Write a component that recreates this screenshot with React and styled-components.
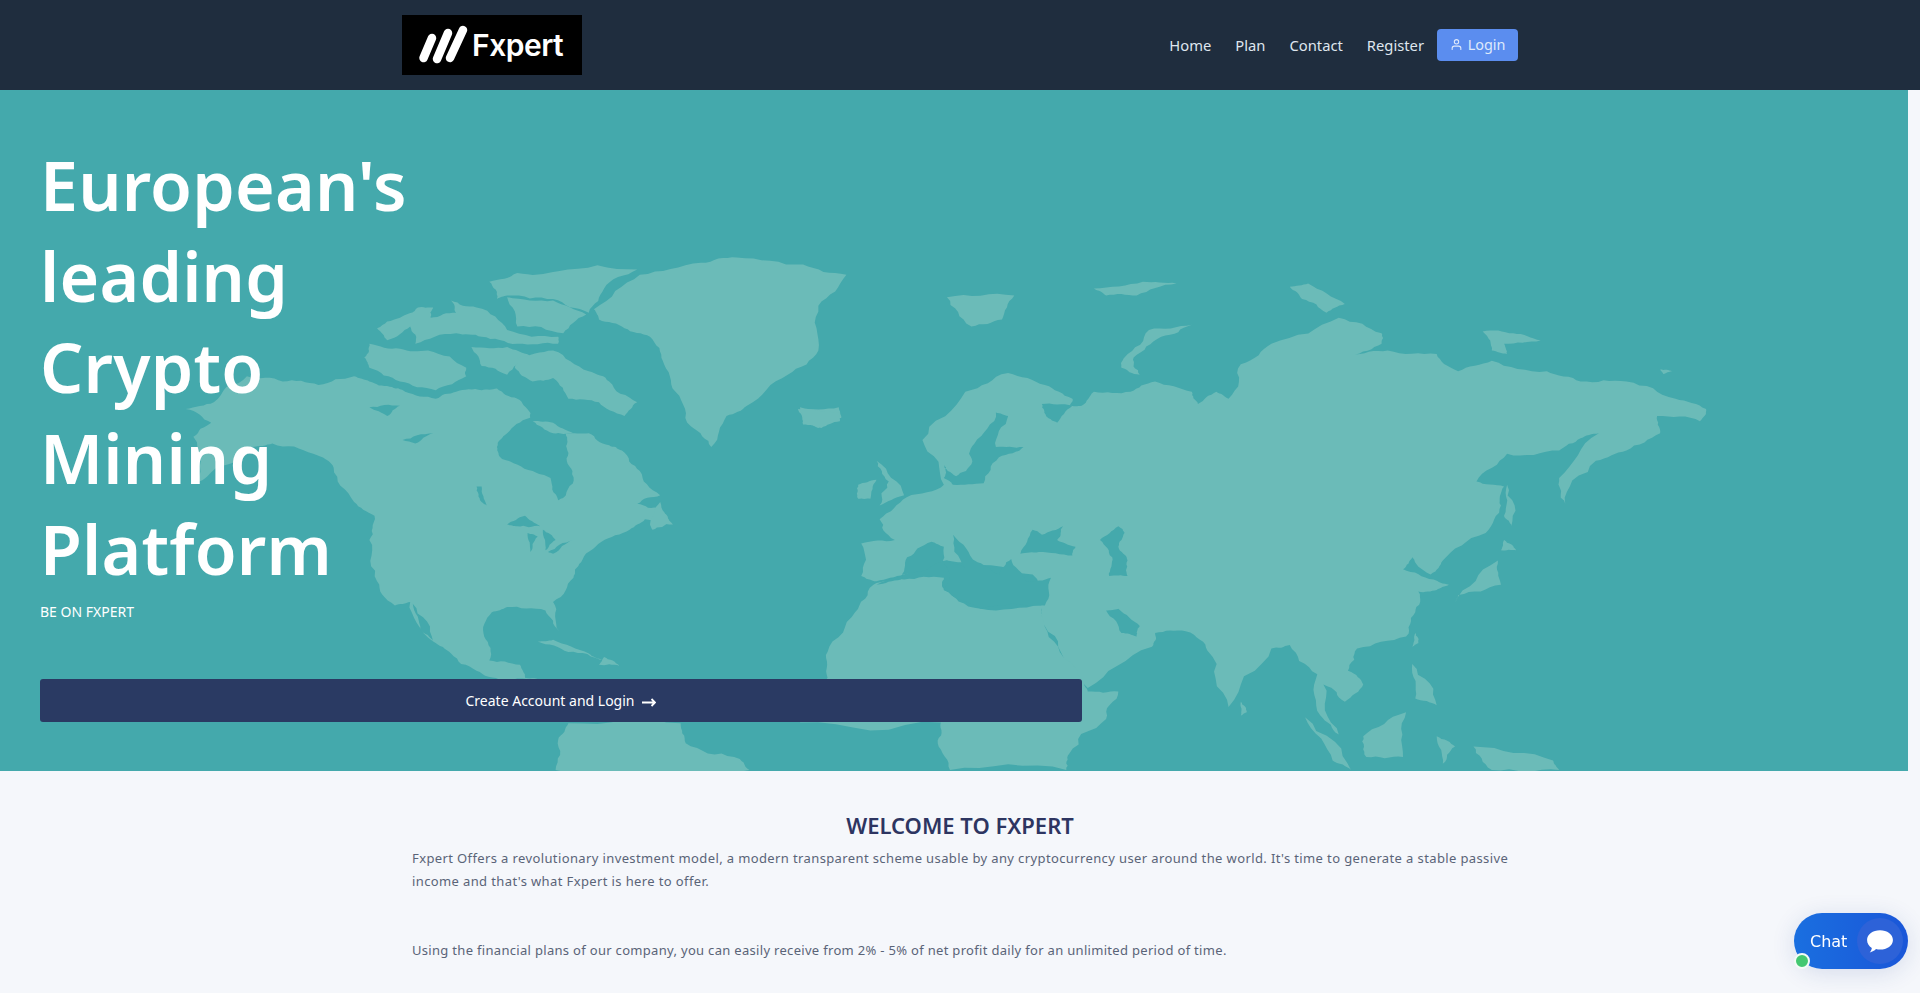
import React from "react";
import styled, { createGlobalStyle } from "styled-components";
import { FiUser } from "react-icons/fi";

const OCEAN = "#44a9ac";
const LAND = "#6bbbb8";

const GlobalStyle = createGlobalStyle`
  html, body { margin: 0; padding: 0; background: #f5f7fb; overflow: hidden; }
  * { box-sizing: border-box; }
  body { font-family: "Noto Sans", "DejaVu Sans", sans-serif; }
`;

const Nav = styled.header`
  height: 90px;
  background: #1f2d3e;
`;
const Container = styled.div`
  width: 1140px;
  margin: 0 auto;
  padding: 0 12px;
  height: 100%;
  display: flex;
  align-items: center;
  justify-content: space-between;
`;
const LogoBox = styled.a`
  display: flex;
  align-items: center;
  width: 180px;
  height: 60px;
  background: #000;
  color: #fff;
`;
const LogoMark = styled.svg`
  width: 70px;
  height: 60px;
  flex: none;
`;
const LogoText = styled.span`
  font-family: Inter, sans-serif;
  font-size: 30px;
  font-weight: 600;
  letter-spacing: -0.5px;
  line-height: 1;
`;
const Menu = styled.nav`
  display: flex;
  align-items: center;
  margin-top: -1px;
`;
const MenuLink = styled.a`
  padding: 0 12px;
  font-size: 14.75px;
  color: #dfe6ee;
  white-space: nowrap;
`;
const LoginButton = styled.a`
  display: flex;
  align-items: center;
  justify-content: center;
  gap: 5px;
  width: 81px;
  height: 32px;
  margin-left: 1px;
  border-radius: 4px;
  background: #5b8def;
  color: #dfe9fb;
  font-size: 14.4px;
  svg { width: 13px; height: 13px; }
`;
const Hero = styled.section`
  position: relative;
  width: 1908px;
  height: 681px;
  padding: 49px 40px 0;
  background: ${OCEAN};
  overflow: hidden;
`;
const MapArt = styled.svg`
  position: absolute;
  inset: 0;
  width: 100%;
  height: 100%;
`;
const HeroBody = styled.div`
  position: relative;
`;
const HeroTitle = styled.h1`
  margin: 0;
  width: 420px;
  color: #fff;
  font-size: 68px;
  font-weight: 600;
  line-height: 91px;
  letter-spacing: 0.2px;
`;
const HeroSub = styled.p`
  margin: 8px 0 0;
  color: #fff;
  font-size: 14px;
  line-height: 20px;
`;
const CreateButton = styled.a`
  display: flex;
  align-items: center;
  justify-content: center;
  gap: 8px;
  width: 1042px;
  height: 43px;
  margin-top: 57px;
  border-radius: 3px;
  background: #2a3a63;
  color: #fff;
  font-size: 14px;
  svg { width: 14px; height: 12px; margin-top: 2px; }
`;
const Welcome = styled.section`
  width: 1140px;
  margin: 0 auto;
  padding: 40px 12px 0 22px;
`;
const WelcomeTitle = styled.h2`
  margin: 0 10px 8px 0;
  text-align: center;
  color: #2d3561;
  font-size: 22px;
  font-weight: 600;
  line-height: 28px;
`;
const Para = styled.p`
  margin: 0 0 46px;
  color: #5a6478;
  font-size: 13px;
  line-height: 23px;
  letter-spacing: ${(p) => p.$spacing};
`;
const ChatPill = styled.button`
  position: fixed;
  left: 1794px;
  top: 913px;
  display: flex;
  align-items: center;
  width: 114px;
  height: 56px;
  padding: 0 5px 0 16px;
  border: 0;
  border-radius: 28px;
  background: linear-gradient(90deg, #1a6fe0, #1a56d8);
  box-shadow: 0 4px 24px rgba(30, 60, 140, 0.14);
  color: #fff;
  font-family: "DejaVu Sans", sans-serif;
  font-size: 16px;
  justify-content: space-between;
`;
const ChatIcon = styled.span`
  display: flex;
  align-items: center;
  justify-content: center;
  width: 46px;
  height: 46px;
  border-radius: 50%;
  background: #2d62d8;
  svg { width: 28px; height: 26px; }
`;
const OnlineDot = styled.span`
  position: absolute;
  left: 0;
  bottom: 0;
  width: 16px;
  height: 16px;
  border: 2px solid #f2fbf6;
  border-radius: 50%;
  background: #43c871;
`;

// traced in two crops of the picture, hence the two transforms
const westLand = [
  "125,500 190,425 260,440 330,450 400,425 430,440 470,455 500,470 560,490 600,470 650,465 680,460 720,490 745,530 745,545 700,590 680,630 690,665 750,700 785,720 800,785 815,770 828,700 818,640 815,590 860,590 900,625 925,640 960,700 1000,770 955,795 1000,810 1025,855 970,840 940,870 885,905 845,965 830,1010 790,1080 802,1165 775,1105 700,1095 670,1110 655,1180 665,1250 725,1262 735,1300 770,1310 690,1310 640,1280 590,1230 555,1195 510,1080 480,1090 445,1020 430,900 440,830 400,790 360,690 320,650 240,620 200,630 130,690 90,735 85,600 120,560 70,520",
  "870,230 960,130 1080,95 1150,80 1280,100 1365,130 1310,220 1310,350 1250,420 1170,510 1130,540 1100,630 1060,570 1030,470 1005,380 980,310 930,285 880,260",
  "1270,520 1350,515 1355,545 1310,575 1280,555",
  "430,330 490,345 545,350 620,400 620,425 560,465 490,440 430,400 420,370",
  "445,285 490,255 525,225 555,225 550,255 600,240 590,205 640,225 700,290 800,310 800,330 720,330 650,310 600,300 520,330 510,280 465,320",
  "665,150 720,125 800,120 955,115 890,170 860,240 790,200 700,190 680,200",
  "700,195 790,205 855,245 810,300 720,280",
  "630,340 700,340 745,365 700,420 650,395",
  "720,370 790,350 860,410 900,440 955,500 930,540 880,500 820,490 790,430 750,440 715,400",
  "750,555 790,560 830,590 790,590",
  "820,1432 800,1480 795,1568 1175,1568 1145,1530 1050,1490 1040,1432",
  "760,1195 790,1190 860,1230 890,1250 820,1225",
  "890,1240 920,1265 880,1262",
  "980,855 1000,790 1020,850 985,870",
];
const westWater = [
  "430,515 490,510 465,540",
  "495,610 555,590 520,620",
  "640,745 650,745 660,800 650,790",
  "700,855 735,830 765,860 720,860",
  "740,880 760,890 745,935",
  "770,870 795,900 775,930",
  "780,935 830,900 790,940",
  "515,1085 555,1195 530,1160",
];
const eastLand = [
  "100,910 155,900 130,840 175,775 235,740 200,610 270,470 340,415 400,450 445,490 440,510 460,510 480,470 540,470 580,440 640,470 650,505 680,470 700,490 720,390 770,330 880,255 950,300 950,330 900,365 960,350 1040,360 1075,410 1130,380 1220,410 1275,440 1350,440 1430,490 1480,520 1470,555 1400,540 1405,590 1350,640 1300,670 1250,795 1240,720 1305,590 1275,605 1240,640 1155,650 1105,730 1150,745 1145,800 1120,880 1050,960 1030,1000 1000,950 985,985 1035,1015 1060,1030 1040,1045 1010,1050 1005,1110 990,1180 910,1215 895,1280 920,1320 890,1370 855,1320 880,1465 850,1410 845,1290 800,1205 770,1215 700,1385 665,1220 630,1165 580,1170 575,1210 470,1330 430,1240 395,1120 380,1000 240,960 170,1000 125,1020 100,1005",
  "120,1030 170,1015 235,1010 235,1045 295,1100 395,1090 395,1120 430,1240 460,1310 470,1340 520,1340 500,1420 440,1520 435,1568 245,1568 225,1490 230,1430 0,1430 45,1300 45,1225 90,1110",
  "240,195 350,190 330,260 280,280",
  "480,170 560,150 615,155 550,190 500,190",
  "640,275 570,290 530,370 525,400 555,420 545,370 590,310",
  "800,165 830,155 890,215 860,240 820,200",
  "1115,295 1165,300 1210,320 1150,330 1155,360 1130,350",
  "1405,405 1425,410 1410,418",
  "125,670 170,770 130,800 145,730",
  "95,740 125,725 115,780 95,780",
  "0,515 65,530 65,555 35,575 5,565",
  "1070,1080 1140,960 1145,1030 1075,1060",
  "1150,900 1170,930 1145,930",
  "1155,740 1162,860 1150,830",
  "1005,1170 1010,1200 1000,1210",
  "720,1370 730,1400 720,1410",
  "825,1415 900,1568 870,1540",
  "920,1470 990,1400 985,1530 925,1530",
  "1000,1260 1040,1380 1005,1360",
  "1100,1500 1230,1540 1240,1568 1130,1568",
  "1040,1470 1070,1500 1050,1550",
];
const eastWater = [
  "285,620 320,530 340,540 320,630 365,630 325,660 300,735 250,740 235,720 235,680 255,715 280,680",
  "395,505 445,510 420,560 405,545",
  "360,940 380,870 395,885 430,860 420,900 450,920 445,945 390,935",
  "490,900 520,860 530,880 520,920 535,960 535,1005 505,1005 510,950",
  "500,1105 520,1100 555,1150 550,1180 525,1170",
  "125,1030 165,1015 175,950 215,905 235,920 245,1000 235,1045 295,1100 400,1090 410,1010 370,1020 345,955 325,1000 290,965 250,885 270,980 240,960 200,990",
];

// breaks the straight traced edges up into a coast line
const roughen = (points) => {
  let pts = points.split(" ").map((p) => p.split(",").map(Number));
  let seed = pts.length * 7 + 3;
  const rand = () => {
    seed = (seed * 9301 + 49297) % 233280;
    return seed / 233280 - 0.5;
  };
  for (let round = 0; round < 3; round++) {
    const next = [];
    pts.forEach((a, i) => {
      const b = pts[(i + 1) % pts.length];
      const dx = b[0] - a[0];
      const dy = b[1] - a[1];
      const k = 0.22 * rand();
      next.push(a, [(a[0] + b[0]) / 2 - dy * k, (a[1] + b[1]) / 2 + dx * k]);
    });
    pts = next;
  }
  return pts.map((p) => p.join(",")).join(" ");
};

const Shapes = ({ list, fill }) =>
  list.map((p, i) => <polygon key={i} points={roughen(p)} fill={fill} />);

const Continents = () => (
  <MapArt viewBox="0 0 1908 681" preserveAspectRatio="none">
    <g transform="translate(150 140) scale(0.5102 0.3444)">
      <Shapes list={westLand} fill={LAND} />
      <Shapes list={westWater} fill={OCEAN} />
    </g>
    <g transform="translate(800 140) scale(0.6122 0.3444)">
      <Shapes list={eastLand} fill={LAND} />
      <Shapes list={eastWater} fill={OCEAN} />
    </g>
  </MapArt>
);

const App = () => (
  <>
    <GlobalStyle />
    <Nav>
      <Container>
        <LogoBox>
          <LogoMark viewBox="0 0 70 60">
            <g stroke="#fff" strokeWidth="8.5" strokeLinecap="round">
              <line x1="21.5" y1="43" x2="30" y2="23" />
              <line x1="35" y1="44" x2="46" y2="18" />
              <line x1="48" y1="43" x2="61" y2="15" />
            </g>
          </LogoMark>
          <LogoText>Fxpert</LogoText>
        </LogoBox>
        <Menu>
          <MenuLink>Home</MenuLink>
          <MenuLink>Plan</MenuLink>
          <MenuLink>Contact</MenuLink>
          <MenuLink>Register</MenuLink>
          <LoginButton><FiUser />Login</LoginButton>
        </Menu>
      </Container>
    </Nav>
    <Hero>
      <Continents />
      <HeroBody>
        <HeroTitle>European's leading Crypto Mining Platform</HeroTitle>
        <HeroSub>BE ON FXPERT</HeroSub>
        <CreateButton>
          Create Account and Login
          <svg viewBox="0 0 14 12" fill="none" stroke="#fff" strokeWidth="1.8">
            <path d="M0 6.500h12.500M9.500 3l3.500 3.500-3.500 3.500" />
          </svg>
        </CreateButton>
      </HeroBody>
    </Hero>
    <Welcome>
      <WelcomeTitle>WELCOME TO FXPERT</WelcomeTitle>
      <Para $spacing="0.38px">Fxpert Offers a revolutionary investment model, a modern transparent scheme usable by any cryptocurrency user around the world. It's time to generate a stable passive income and that's what Fxpert is here to offer.</Para>
      <Para $spacing="0.31px">Using the financial plans of our company, you can easily receive from 2% - 5% of net profit daily for an unlimited period of time.</Para>
    </Welcome>
    <ChatPill>
      Chat
      <ChatIcon>
        <svg viewBox="0 0 26 24" fill="#fff">
          <path d="M13 2c6.600 0 12 3.800 12 9s-5.400 9-12 9c-1.300 0-2.500-.1-3.700-.5C7.800 21 6 22.200 3.500 22.600c1-1.100 1.700-2.500 1.900-4.100C2.700 16.700 1 14.100 1 11c0-5.200 5.400-9 12-9z" />
        </svg>
      </ChatIcon>
      <OnlineDot />
    </ChatPill>
  </>
);

export default App;
